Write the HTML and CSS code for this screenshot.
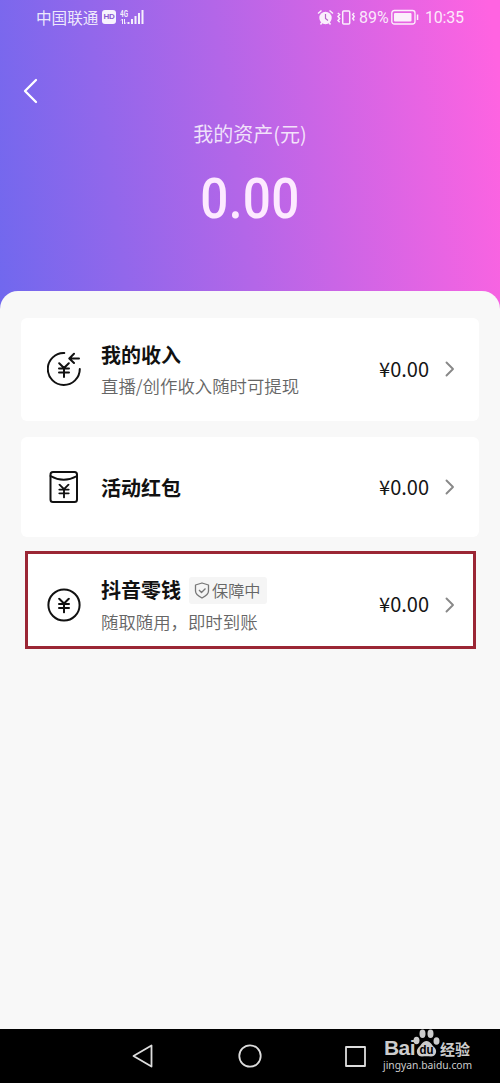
FILE: index.html
```html
<!DOCTYPE html>
<html lang="zh-CN">
<head>
<meta charset="utf-8">
<title>我的资产</title>
<link rel="stylesheet" href="styles.css">
</head>
<body>
<svg class="defs" width="0" height="0">
  <symbol id="yen" viewBox="0 0 12 16"><path d="M1.2 1.2 6 6l4.8-4.8M1 6.5h10M1 10.5h10M6 6v9"/></symbol>
</svg>
<div class="phone">
  <header class="hero">
    <div class="status">
      <span class="carrier">中国联通</span>
      <span class="hd">HD</span>
      <svg class="signal" width="25" height="17" viewBox="0 0 25 17">
        <text x="0" y="7.500" font-size="9" textLength="8" lengthAdjust="spacingAndGlyphs">4G</text>
        <path d="M1 11.500l1.500-1.500v5M4.500 10v5l1.500-1.500" fill="none" stroke="#fff"/>
        <path d="M7.500 13h2v2h-2zM11 10h2v5h-2zM14.500 7h2v8h-2zM18 4h2v11h-2zM21.500 1h2v14h-2z"/>
      </svg>
      <svg class="alarm" width="17" height="17" viewBox="0 0 17 17">
        <circle cx="8.500" cy="9" r="6.200"/>
        <path d="M1 4.500 4.500 1.500M12.500 1.500 16 4.500M3.500 15.500l1.500-2M13.500 15.500l-1.500-2" stroke="#fff" stroke-width="1.500"/>
        <path d="M8.500 5v4.500l2.500 2" fill="none" stroke="#b565c8" stroke-width="1.200"/>
      </svg>
      <svg class="vibrate" width="19" height="17" viewBox="0 0 19 17" stroke="#fff" stroke-width="1.500">
        <rect x="5.700" y="2" width="7" height="13" rx="1" fill="none"/>
        <path fill="none" d="M.8 4l1.900 1.500L1 7.500l1.700 2L1 11.500l1.700 1.700M17.200 4l-1.500 1.500 1.500 2-1.500 2 1.500 2"/>
      </svg>
      <span class="percent">89%</span>
      <svg class="battery" width="29" height="17" viewBox="0 0 29 17">
        <rect x=".8" y="1.500" width="23.200" height="13.500" rx="2.500" fill="none" stroke="#fff" stroke-width="1.300"/>
        <rect x="3" y="4" width="17.500" height="8.500" rx="1"/><path d="M25.800 5.500h1.500v5.500h-1.500z"/>
      </svg>
      <span class="time">10:35</span>
    </div>
    <svg class="back" width="16" height="26" viewBox="0 0 16 26"><path d="M14 2 3 13l11 11"/></svg>
    <div class="asset-label">我的资产(元)</div>
    <div class="asset-value">0.00</div>
  </header>
  <main class="sheet">
    <section class="card income">
      <svg class="icon" width="34" height="34" viewBox="0 0 34 34"><path d="M17.300 1A16 16 0 1 0 32.800 17M32 6.500h-9M27 1.800 22.300 6.500 27 11"/><use href="#yen" x="11" y="10" width="12" height="16"/></svg>
      <div class="info"><div class="title">我的收入</div><div class="sub">直播/创作收入随时可提现</div></div>
      <span class="amount">¥0.00</span>
      <svg class="chevron" width="10" height="16" viewBox="0 0 10 16"><path d="m1.500 1.500 6.500 6.500-6.500 6.500"/></svg>
    </section>
    <section class="card packet">
      <svg class="icon" width="34" height="34" viewBox="0 0 34 34"><rect x="3.500" y="2" width="26.500" height="30" rx="2.500"/><path d="M3.500 6q13.200 7.500 26.500 0"/><use href="#yen" x="11" y="13.500" width="12" height="15"/></svg>
      <div class="info"><div class="title">活动红包</div></div>
      <span class="amount">¥0.00</span>
      <svg class="chevron" width="10" height="16" viewBox="0 0 10 16"><path d="m1.500 1.500 6.500 6.500-6.500 6.500"/></svg>
    </section>
    <section class="card wallet">
      <svg class="icon" width="34" height="34" viewBox="0 0 34 34"><circle cx="17" cy="17" r="15.600"/><use href="#yen" x="11" y="9.500" width="12" height="16"/></svg>
      <div class="info">
        <div class="title-row"><span class="title">抖音零钱</span>
          <span class="badge"><svg width="16" height="17" viewBox="0 0 16 17"><path d="M8 1 14.500 3v6c0 3-2.500 5-6.500 7-4-2-6.500-4-6.500-7V3zM5 8l2.500 2.500L11.500 6.500"/></svg>保障中</span>
        </div>
        <div class="sub">随取随用，即时到账</div>
      </div>
      <span class="amount">¥0.00</span>
      <svg class="chevron" width="10" height="16" viewBox="0 0 10 16"><path d="m1.500 1.500 6.500 6.500-6.500 6.500"/></svg>
    </section>
  </main>
  <footer class="nav">
    <svg class="nav-back" width="22" height="24" viewBox="0 0 22 24"><path d="M19.500 1.500v21L1.500 12z"/></svg>
    <svg class="nav-home" width="24" height="24" viewBox="0 0 24 24"><circle cx="12" cy="12" r="10.700"/></svg>
    <svg class="nav-recent" width="21" height="21" viewBox="0 0 21 21"><path d="M1 1h19v19H1z"/></svg>
    <div class="brand">
      <div class="brand-top"><span class="bai">Bai</span>
        <svg class="paw" width="27" height="28" viewBox="0 0 27 28">
          <ellipse cx="3.500" cy="11.500" rx="3" ry="3.800"/><ellipse cx="9.500" cy="4.800" rx="3" ry="4.200"/><ellipse cx="17.500" cy="4.800" rx="3" ry="4.200"/><ellipse cx="23.500" cy="12" rx="3" ry="3.800"/>
          <path d="M13.500 12c4 0 5 4 8 6.500 3.500 4 1 9-3.500 9-3-.5-6-.5-9 0-4.500 0-7-5-3.500-9 3-2.500 4-6.500 8-6.500z"/>
          <text x="6.500" y="25" font-size="12" textLength="14" lengthAdjust="spacingAndGlyphs">du</text>
        </svg>
        <span class="jingyan">经验</span>
      </div>
      <div class="url">jingyan.baidu.com</div>
    </div>
  </footer>
</div>
</body>
</html>
```

FILE: styles.css
```css
* { box-sizing: border-box; }
body { margin: 0; font-family: Roboto, "Noto Sans CJK SC", sans-serif; }
svg { display: block; flex: none; }
.defs { position: absolute; }
.phone {
  width: 500px;
  height: 1083px;
  display: flex;
  flex-direction: column;
  overflow: hidden;
  background: linear-gradient(82deg, #7068ee 0, #b366e8 47%, #ff63e1 98%) 0 0 / 500px 310px no-repeat #f8f8f8;
}
.hero { height: 291px; flex: none; color: #fff; }
.status {
  height: 34px;
  display: flex;
  align-items: center;
  padding-left: 36px;
  font-size: 16px;
  line-height: 20px;
  white-space: nowrap;
  color: rgba(255, 255, 255, .87);
}
.status svg { fill: #fff; opacity: .9; }
.carrier { width: 65px; font: 400 15.600px/20px "Noto Sans CJK SC", sans-serif; }
.hd {
  width: 14px;
  height: 14px;
  margin-left: 1px;
  border-radius: 3px;
  background: rgba(255, 255, 255, .92);
  color: #8b5bd0;
  font: bold 8px/14px "Liberation Sans", sans-serif;
  text-align: center;
  letter-spacing: -.3px;
}
.signal { margin-left: 4px; font-family: Roboto, sans-serif; font-weight: 700; }
.alarm { margin-left: 172px; }
.vibrate { margin-left: 3px; }
.percent { width: 32px; margin-left: 3px; padding-top: 2px; letter-spacing: 0; }
.battery { margin-left: 0; }
.time { margin-left: 5px; padding-top: 2px; letter-spacing: -.2px; }
.back { margin: 44px 0 0 22px; }
.back path { fill: none; stroke: #fff; stroke-width: 2.300; stroke-linecap: round; stroke-linejoin: round; }
.asset-label {
  margin-top: 16px;
  height: 28px;
  text-align: center;
  font: 400 20px/28px "Noto Sans CJK SC", sans-serif;
  color: rgba(255, 255, 255, .82);
}
.asset-value {
  margin-top: 19px;
  height: 64px;
  text-align: center;
  font: 500 55px/64px Roboto, sans-serif;
  letter-spacing: .4px;
  transform: scaleX(.9);
  color: #fdeaff;
}
.sheet {
  flex: 1;
  padding: 27px 21px 0;
  border-radius: 18px 18px 0 0;
  background: #f8f8f8;
}
.card {
  display: flex;
  align-items: center;
  padding: 0 24px 0 26px;
  border-radius: 6px;
  background: #fff;
}
.income { height: 103px; padding-bottom: 1px; }
.packet { height: 100px; margin-top: 16px; }
.wallet {
  height: 98px;
  margin: 14px 3px 0 4px;
  padding: 9px 18px 0 19px;
  border: 3px solid #9b2635;
  border-radius: 0;
}
.icon, .back, .chevron { fill: none; stroke-linecap: round; stroke-linejoin: round; }
.icon { stroke: #111; stroke-width: 2; }
.info { flex: 1; margin-left: 20px; }
.title { font: 700 20px/28px "Noto Sans CJK SC", sans-serif; color: #111; }
.packet .title { padding-top: 2px; }
.income .title { padding-top: 2px; }
.sub { margin-top: 5px; font: 350 17.400px/26px "Noto Sans CJK SC", sans-serif; color: #666; white-space: nowrap; }
.wallet .info { padding-top: 2px; }
.income .sub { margin-top: 4px; }
.title-row { display: flex; align-items: center; }
.badge {
  display: flex;
  align-items: center;
  width: 78px;
  height: 27px;
  margin-left: 8px;
  padding-left: 5px;
  gap: 2px;
  background: #f5f5f5;
  border-radius: 3px;
  color: #666;
  font: 350 16.200px/26px "Noto Sans CJK SC", sans-serif;
}
.badge path { fill: none; stroke: #777; stroke-width: 1.300; stroke-linejoin: round; }
.amount { width: 52px; margin-right: 16px; padding-bottom: 1px; font: 20px/24px "Noto Sans CJK SC", sans-serif; color: #151515; text-align: right; white-space: nowrap; }
.chevron { stroke: #888; stroke-width: 1.900; }
.nav { height: 54px; flex: none; display: flex; align-items: center; padding-left: 132px; background: #000; }
.nav svg { fill: none; stroke: #ddd; stroke-width: 1.800; stroke-linejoin: round; }
.nav-home { margin-left: 84px; }
.nav-recent { margin-left: 83px; }
.brand { height: 54px; margin-left: 17px; color: #ccc; }
.brand-top { display: flex; height: 28px; align-items: flex-end; }
.bai { width: 30px; padding-left: 1px; font: bold 21px/19px "Liberation Sans", sans-serif; letter-spacing: -.6px; }
.nav .paw { fill: #ccc; stroke: none; }
.paw text { fill: #000; font-family: "Liberation Sans", sans-serif; font-weight: 700; }
.jingyan { font: 700 15px/17px "Noto Sans CJK SC", sans-serif; white-space: nowrap; }
.url { font: 10.300px/16px "Noto Sans", sans-serif; }
```
